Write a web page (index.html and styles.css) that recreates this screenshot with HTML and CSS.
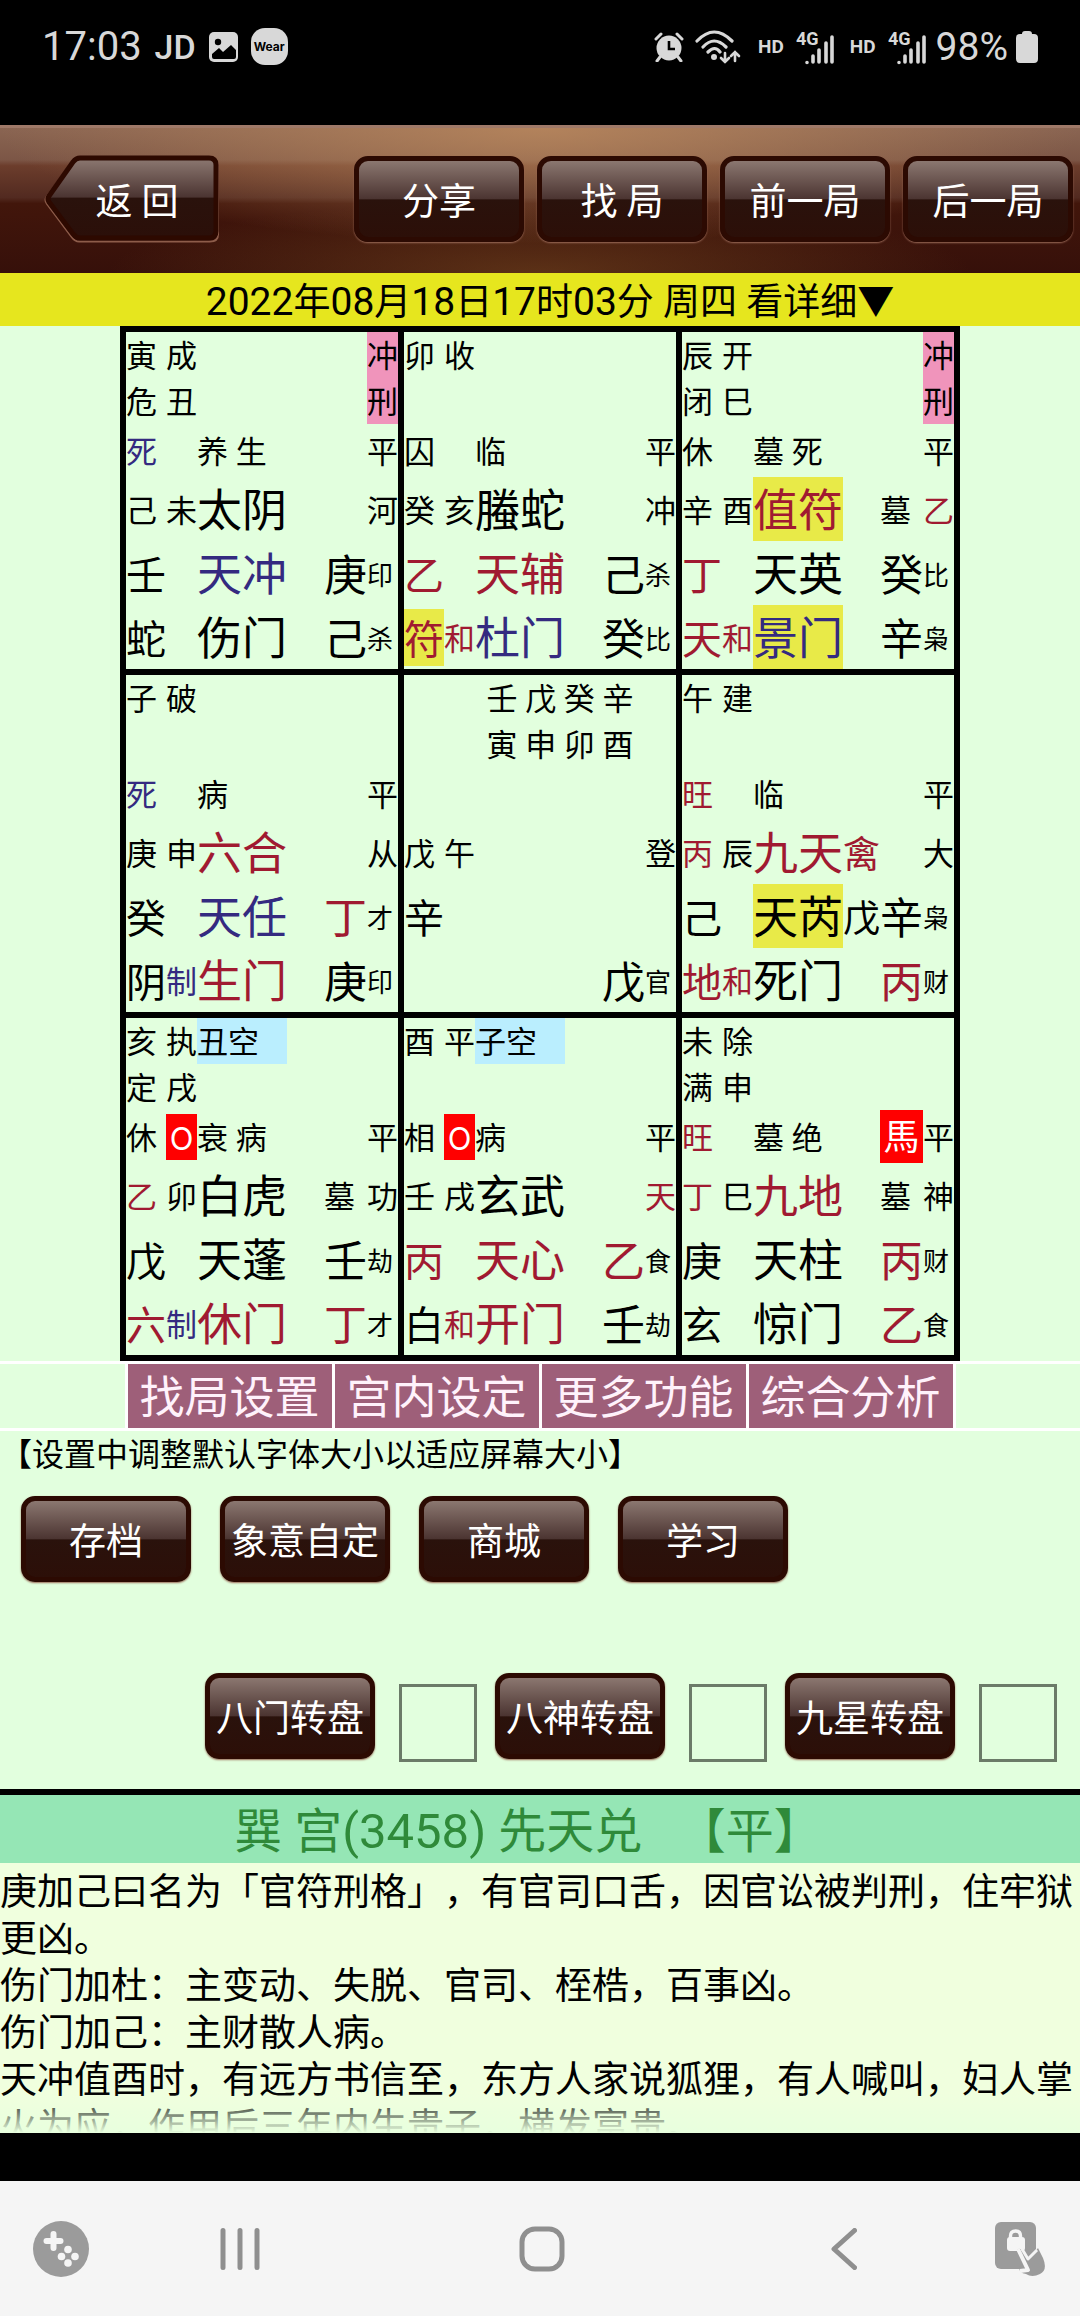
FILE: index.html
```html
<!DOCTYPE html>
<html lang="zh-CN">
<head>
<meta charset="utf-8">
<meta name="viewport" content="width=device-width, initial-scale=1">
<title>奇门排盘</title>
<link rel="stylesheet" href="styles.css">
</head>
<body>
<div class="status">
  <div class="status-left">
    <span class="clock">17:03</span>
    <span class="jd">JD</span>
    <svg class="pic" width="29" height="30" viewBox="0 0 29 30"><rect width="29" height="30" rx="5" fill="#d8d8d8"/><circle cx="9" cy="10" r="3.2" fill="#000"/><path d="M3 22l7-6 4 4 8-7 5 5v7q0 2-2 2H5q-2 0-2-2z" fill="#000"/></svg>
    <span class="wear">Wear</span>
  </div>
  <div class="status-right">
    <svg width="30" height="30" viewBox="0 0 30 30"><circle cx="15" cy="16" r="12.5" fill="#d8d8d8"/><path d="M2 7l5-5M28 7l-5-5M6 25l-3 4M24 25l3 4" stroke="#d8d8d8" stroke-width="3" stroke-linecap="round"/><path d="M15 9v8h6" fill="none" stroke="#000" stroke-width="2.6"/></svg>
    <svg class="wifi" width="46" height="34" viewBox="0 0 46 34" fill="none" stroke="#d8d8d8" stroke-width="3.2" stroke-linecap="round"><path d="M2 11q17-18 35 0M8 17q11-12 23 0M13 22q7-7 12 0"/><path d="M30 23v9m-4-4l4 4 4-4M40 31v-9m-4 4l4-4 4 4" stroke-width="2.6"/><circle cx="19" cy="27" r="1.4"/></svg>
    <span class="hd">HD</span>
    <svg width="40" height="40" viewBox="0 0 40 40"><text x="0" y="18" class="net">4G</text><path d="M11 35.500v0M17 29v6M23 23v12M30 16v19M36 10v25" stroke="#d8d8d8" stroke-width="3.600" stroke-linecap="round"/></svg>
    <span class="hd">HD</span>
    <svg width="40" height="40" viewBox="0 0 40 40"><text x="0" y="18" class="net">4G</text><path d="M11 35.500v0M17 29v6M23 23v12M30 16v19M36 10v25" stroke="#d8d8d8" stroke-width="3.600" stroke-linecap="round"/></svg>
    <span class="pct">98%</span>
    <svg width="22" height="32" viewBox="0 0 22 32"><path d="M6 3q0-3 3-3h4q3 0 3 3h2q4 0 4 4v21q0 4-4 4H4q-4 0-4-4V7q0-4 4-4z" fill="#d8d8d8"/></svg>
  </div>
</div>

<header class="bar">
  <button class="back" type="button">
    <svg viewBox="0 0 178 90" width="178" height="90" aria-hidden="true">
      <defs><linearGradient id="g" x1="0" y1="0" x2="0" y2="1"><stop offset="0" stop-color="#8d7972"/><stop offset=".49" stop-color="#4b3431"/><stop offset=".5" stop-color="#2a120c"/><stop offset="1" stop-color="#2b0f09"/></linearGradient></defs>
      <path d="M35 4.500H166q8 0 8 8v68q0 7-8 7H35q-4 0-7-4L3 50q-3-4 0-8L28 8q3-3.500 7-3.500z" fill="none" stroke="#8d5c4a" stroke-width="2"/>
      <path d="M36 4H165q7 0 7 7v66q0 7-7 7H36q-4 0-7-4L5 48q-2-3 0-6L29 8q3-4 7-4z" fill="url(#g)" stroke="#2d0900" stroke-width="5"/>
    </svg>
    <span>返 回</span>
  </button>
  <nav class="tools">
    <button class="btn" type="button">分享</button>
    <button class="btn" type="button">找 局</button>
    <button class="btn" type="button">前一局</button>
    <button class="btn" type="button">后一局</button>
  </nav>
</header>

<button class="date" type="button"><span class="num">2022</span>年<span class="num">08</span>月<span class="num">18</span>日<span class="num">17</span>时<span class="num">03</span>分 周四 看详细▼</button>

<main class="main">
<section class="board">
  <div class="palace">
    <div class="row s"><span class="c1">寅</span><span class="c2">成</span><span class="c6 pink">冲</span></div>
    <div class="row s"><span class="c1">危</span><span class="c2">丑</span><span class="c6 pink">刑</span></div>
    <div class="row m"><span class="c1 blue">死</span><span class="c3">养 生</span><span class="c6">平</span></div>
    <div class="row l"><span class="c1">己</span><span class="c2">未</span><span class="c3 big">太阴</span><span class="c6">河</span></div>
    <div class="row l"><span class="c1 mid">壬</span><span class="c3 big blue">天冲</span><span class="c5 stem">庚</span><span class="c6 tiny">印</span></div>
    <div class="row l"><span class="c1 mid">蛇</span><span class="c3 big">伤门</span><span class="c5 stem">己</span><span class="c6 tiny">杀</span></div>
  </div>
  <div class="palace">
    <div class="row s"><span class="c1">卯</span><span class="c2">收</span></div>
    <div class="row s"></div>
    <div class="row m"><span class="c1">囚</span><span class="c3">临</span><span class="c6">平</span></div>
    <div class="row l"><span class="c1">癸</span><span class="c2">亥</span><span class="c3 big">螣蛇</span><span class="c6">冲</span></div>
    <div class="row l"><span class="c1 mid red">乙</span><span class="c3 big red">天辅</span><span class="c5 stem">己</span><span class="c6 tiny">杀</span></div>
    <div class="row l"><span class="c1 mid red hl">符</span><span class="c2 red">和</span><span class="c3 big blue">杜门</span><span class="c5 stem">癸</span><span class="c6 tiny">比</span></div>
  </div>
  <div class="palace">
    <div class="row s"><span class="c1">辰</span><span class="c2">开</span><span class="c6 pink">冲</span></div>
    <div class="row s"><span class="c1">闭</span><span class="c2">巳</span><span class="c6 pink">刑</span></div>
    <div class="row m"><span class="c1">休</span><span class="c3">墓 死</span><span class="c6">平</span></div>
    <div class="row l"><span class="c1">辛</span><span class="c2">酉</span><span class="c3 big red hl">值符</span><span class="c5">墓</span><span class="c6 red">乙</span></div>
    <div class="row l"><span class="c1 mid red">丁</span><span class="c3 big">天英</span><span class="c5 stem">癸</span><span class="c6 tiny">比</span></div>
    <div class="row l"><span class="c1 mid red">天</span><span class="c2 red">和</span><span class="c3 big blue hl">景门</span><span class="c5 stem">辛</span><span class="c6 tiny">枭</span></div>
  </div>
  <div class="palace">
    <div class="row s"><span class="c1">子</span><span class="c2">破</span></div>
    <div class="row s"></div>
    <div class="row m"><span class="c1 blue">死</span><span class="c3">病</span><span class="c6">平</span></div>
    <div class="row l"><span class="c1">庚</span><span class="c2">申</span><span class="c3 big red">六合</span><span class="c6">从</span></div>
    <div class="row l"><span class="c1 mid">癸</span><span class="c3 big blue">天任</span><span class="c5 stem red">丁</span><span class="c6 tiny">才</span></div>
    <div class="row l"><span class="c1 mid">阴</span><span class="c2 blue">制</span><span class="c3 big red">生门</span><span class="c5 stem">庚</span><span class="c6 tiny">印</span></div>
  </div>
  <div class="palace">
    <div class="row s"><span class="pillars">壬 戊 癸 辛</span></div>
    <div class="row s"><span class="pillars">寅 申 卯 酉</span></div>
    <div class="row m"></div>
    <div class="row l"><span class="c1">戊</span><span class="c2">午</span><span class="c6">登</span></div>
    <div class="row l"><span class="c1 mid">辛</span></div>
    <div class="row l"><span class="c5 stem">戊</span><span class="c6 tiny">官</span></div>
  </div>
  <div class="palace">
    <div class="row s"><span class="c1">午</span><span class="c2">建</span></div>
    <div class="row s"></div>
    <div class="row m"><span class="c1 red">旺</span><span class="c3">临</span><span class="c6">平</span></div>
    <div class="row l"><span class="c1 red">丙</span><span class="c2">辰</span><span class="c3 big red">九天</span><span class="c4 guest red">禽</span><span class="c6">大</span></div>
    <div class="row l"><span class="c1 mid">己</span><span class="c3 big hl">天芮</span><span class="c4 guest">戊</span><span class="c5 stem">辛</span><span class="c6 tiny">枭</span></div>
    <div class="row l"><span class="c1 mid red">地</span><span class="c2 red">和</span><span class="c3 big">死门</span><span class="c5 stem red">丙</span><span class="c6 tiny">财</span></div>
  </div>
  <div class="palace">
    <div class="row s"><span class="c1">亥</span><span class="c2">执</span><span class="c3 sky">丑空</span></div>
    <div class="row s"><span class="c1">定</span><span class="c2">戌</span></div>
    <div class="row m"><span class="c1">休</span><span class="c2 mark void">O</span><span class="c3">衰 病</span><span class="c6">平</span></div>
    <div class="row l"><span class="c1 red">乙</span><span class="c2">卯</span><span class="c3 big">白虎</span><span class="c5">墓</span><span class="c6">功</span></div>
    <div class="row l"><span class="c1 mid">戊</span><span class="c3 big">天蓬</span><span class="c5 stem">壬</span><span class="c6 tiny">劫</span></div>
    <div class="row l"><span class="c1 mid red">六</span><span class="c2 blue">制</span><span class="c3 big red">休门</span><span class="c5 stem red">丁</span><span class="c6 tiny">才</span></div>
  </div>
  <div class="palace">
    <div class="row s"><span class="c1">酉</span><span class="c2">平</span><span class="c3 sky">子空</span></div>
    <div class="row s"></div>
    <div class="row m"><span class="c1">相</span><span class="c2 mark void">O</span><span class="c3">病</span><span class="c6">平</span></div>
    <div class="row l"><span class="c1">壬</span><span class="c2">戌</span><span class="c3 big">玄武</span><span class="c6 red">天</span></div>
    <div class="row l"><span class="c1 mid red">丙</span><span class="c3 big red">天心</span><span class="c5 stem red">乙</span><span class="c6 tiny">食</span></div>
    <div class="row l"><span class="c1 mid">白</span><span class="c2 red">和</span><span class="c3 big red">开门</span><span class="c5 stem">壬</span><span class="c6 tiny">劫</span></div>
  </div>
  <div class="palace">
    <div class="row s"><span class="c1">未</span><span class="c2">除</span></div>
    <div class="row s"><span class="c1">满</span><span class="c2">申</span></div>
    <div class="row m"><span class="c1 red">旺</span><span class="c3">墓 绝</span><span class="c5 mark horse">馬</span><span class="c6">平</span></div>
    <div class="row l"><span class="c1 red">丁</span><span class="c2">巳</span><span class="c3 big red">九地</span><span class="c5">墓</span><span class="c6">神</span></div>
    <div class="row l"><span class="c1 mid">庚</span><span class="c3 big">天柱</span><span class="c5 stem red">丙</span><span class="c6 tiny">财</span></div>
    <div class="row l"><span class="c1 mid">玄</span><span class="c3 big">惊门</span><span class="c5 stem red">乙</span><span class="c6 tiny">食</span></div>
  </div>
</section>

<nav class="tabs">
  <span class="side"></span>
  <button type="button">找局设置</button>
  <button type="button">宫内设定</button>
  <button type="button">更多功能</button>
  <button type="button">综合分析</button>
  <span class="side"></span>
</nav>

<p class="note">【设置中调整默认字体大小以适应屏幕大小】</p>

<div class="actions">
  <button class="btn" type="button">存档</button>
  <button class="btn" type="button">象意自定</button>
  <button class="btn" type="button">商城</button>
  <button class="btn" type="button">学习</button>
</div>

<div class="turns">
  <div class="turn"><button class="btn" type="button" id="t1">八门转盘</button><input type="checkbox" aria-labelledby="t1"></div>
  <div class="turn"><button class="btn" type="button" id="t2">八神转盘</button><input type="checkbox" aria-labelledby="t2"></div>
  <div class="turn"><button class="btn" type="button" id="t3">九星转盘</button><input type="checkbox" aria-labelledby="t3"></div>
</div>

<h1 class="title">巽 宫<span class="num">(3458)</span> 先天兑&nbsp;&nbsp; 【平】&nbsp;&nbsp;</h1>
<article class="detail">
  <p>庚加己曰名为「官符刑格」，有官司口舌，因官讼被判刑，住牢狱更凶。</p>
  <p>伤门加杜：主变动、失脱、官司、桎梏，百事凶。</p>
  <p>伤门加己：主财散人病。</p>
  <p>天冲值酉时，有远方书信至，东方人家说狐狸，有人喊叫，妇人掌火为应，作用后三年内生贵子，横发富贵。</p>
</article>
</main>

<footer class="sysnav">
  <button class="end" type="button" aria-label="游戏工具"><svg width="56" height="56" viewBox="0 0 56 56"><circle cx="28" cy="28" r="28" fill="#9b9b9b"/><path d="M20.500 13v14M13.500 20h14" stroke="#f5f5f5" stroke-width="6" stroke-linecap="round"/><g fill="#f5f5f5"><circle cx="35" cy="28.500" r="3.800"/><circle cx="28.500" cy="35.500" r="3.800"/><circle cx="42" cy="35.500" r="3.800"/><circle cx="35" cy="42" r="3.800"/></g></svg></button>
  <button type="button" aria-label="最近任务"><svg width="40" height="42" viewBox="0 0 40 42"><path d="M3 2.500v37M20 2.500v37M37 2.500v37" stroke="#8f8f8f" stroke-width="5" stroke-linecap="round"/></svg></button>
  <button type="button" aria-label="主页"><svg width="46" height="46" viewBox="0 0 46 46"><rect x="3" y="3" width="40" height="40" rx="13" fill="none" stroke="#8f8f8f" stroke-width="5"/></svg></button>
  <button type="button" aria-label="返回"><svg width="26" height="42" viewBox="0 0 26 42"><path d="M23.500 2.500L3 21l20.500 18.500" fill="none" stroke="#8f8f8f" stroke-width="5" stroke-linecap="round" stroke-linejoin="round"/></svg></button>
  <button class="start" type="button" aria-label="锁定触摸"><svg width="52" height="54" viewBox="0 0 52 54"><rect width="41" height="47" rx="6" fill="#9b9b9b"/><rect x="12" y="15" width="18" height="14" rx="3" fill="#f5f5f5"/><path d="M15.500 17v-3q0-5 5-5t5 5v3" fill="none" stroke="#f5f5f5" stroke-width="3.400"/><path d="M22 28q3-3 5 1l6 10 2-8q2-4 5-1l3-4 5 10q5 12-3 16-8 4-14 0-7-1-7-7l6-2z" fill="#9b9b9b"/><path d="M23 27l10 21-8 1" fill="none" stroke="#f5f5f5" stroke-width="4" stroke-linejoin="round"/><path d="M27 27l6 10 9-9" fill="none" stroke="#f5f5f5" stroke-width="3" stroke-linejoin="round"/></svg></button>
</footer>
</body>
</html>
```
FILE: styles.css
```css
* { box-sizing: border-box; }

body {
  margin: 0;
  height: 100vh;
  display: flex;
  flex-direction: column;
  background: #000;
  color: #000;
  font-family: Roboto, "Noto Sans CJK SC", sans-serif;
  font-size: 37px;
  text-spacing-trim: space-all;
}

button {
  margin: 0;
  padding: 0;
  border: 0;
  background: none;
  color: inherit;
  font: inherit;
  white-space: nowrap;
}

p, h1 { margin: 0; font-weight: 400; }
svg { display: block; flex: none; }

/* phone status bar */
.status {
  flex: none;
  height: 125px;
  padding: 0 42px 32px;
  display: flex;
  justify-content: space-between;
  align-items: center;
  color: #d8d8d8;
}
.status-left, .status-right { display: flex; align-items: center; }
.status-left { gap: 13px; }
.status-right { gap: 8px; }
.clock { font-size: 40px; line-height: 48px; }
.pct { font-size: 39px; line-height: 48px; }
.jd { font-size: 34px; line-height: 48px; font-weight: 500; }
.wear {
  width: 37px;
  height: 37px;
  border-radius: 14px;
  background: #d8d8d8;
  color: #000;
  font: 700 12px/37px Inter, sans-serif;
  text-align: center;
}
.wifi { margin: 0 3px; }
.hd { padding: 0 4px 0 6px; font-size: 19px; font-weight: 700; }
.net { font: 700 18px Roboto, sans-serif; fill: #d8d8d8; }

/* leather header */
.bar {
  flex: none;
  height: 148px;
  padding: 0 7px 4px 44px;
  display: flex;
  justify-content: space-between;
  align-items: center;
  border-top: 3px solid #9f7968;
  background:
    radial-gradient(ellipse 50% 80% at 50% 0, #bd8a5ecc, #bd8a5e00),
    radial-gradient(ellipse 40% 50% at 50% 100%, #75471f99, #75471f00),
    linear-gradient(#8a6552 0, #7c5646 22%, #6c3d2c 26%, #522a20 48%, #42160b 52%, #36100a 100%);
}
.tools { display: flex; gap: 13px; }
.btn {
  width: 170px;
  height: 86px;
  border: 5px solid #2c0a02;
  border-radius: 14px;
  background: linear-gradient(#8b7770, #4b3431 50%, #2a120c 51%, #2c0f08);
  box-shadow: 0 1px 2px #9a6a58;
  color: #fff;
}
.back {
  position: relative;
  width: 178px;
  height: 90px;
  color: #fff;
}
.back svg { position: absolute; inset: 0; }
.back span { position: relative; padding-left: 8px; }

.date {
  flex: none;
  height: 53px;
  padding: 6px 0 0 20px;
  background: #e6e61e;
  line-height: 47px;
}
.date .num { font-size: 39px; }

.main {
  flex: 1;
  min-height: 0;
  display: flex;
  flex-direction: column;
  background: #e2ffde;
}

/* nine-palace board */
.board {
  flex: none;
  width: 100%;
  max-width: 840px;
  margin: 0 auto;
  display: grid;
  grid-template-columns: repeat(3, minmax(0, 1fr));
  gap: 6px;
  border: 6px solid #000;
  background: #000;
  font-size: 31px;
  line-height: 42px;
  white-space: nowrap;
}
.palace { background: #e2ffde; }
.row {
  display: grid;
  grid-template-columns: minmax(0, 40fr) minmax(0, 31fr) minmax(0, 90fr) minmax(0, 37fr) minmax(0, 43fr) minmax(0, 31fr);
  align-items: center;
}
.s { min-height: 46px; }
.m { min-height: 53px; }
.l { min-height: 64px; }
.row > * { grid-row: 1; padding-top: 4px; }
.l > * { padding-top: 6px; }
.c1 { grid-column: 1; }
.c2 { grid-column: 2; }
.c3 { grid-column: 3; }
.c4 { grid-column: 4; }
.c5 { grid-column: 5; }
.c6 { grid-column: 6; }
.pillars { grid-column: 3 / 6; text-align: center; }
.tiny { font-size: 26px; }
.guest { font-size: 37px; line-height: 51px; }
.mid { font-size: 40px; line-height: 51px; }
.stem { font-size: 43px; line-height: 58px; }
.big { font-size: 45px; line-height: 58px; }
.red { color: #a01a31; }
.blue { color: #342a80; }
.hl { background: #e8ea48; }
.pink { background: #f094bb; }
.sky { background: #baeefe; }
.mark { background: #f00; color: #fff; text-align: center; }
.void { font-family: Inter, sans-serif; }
.horse { font-size: 36px; line-height: 49px; }

.tabs {
  flex: none;
  display: grid;
  grid-template-columns: 1fr repeat(4, 204px) 1fr;
  gap: 3px;
  padding: 3px 0;
  background: #fff;
  font-size: 45px;
  line-height: 58px;
}
.tabs button { padding-top: 6px; background: #9e5f79; color: #fff2fb; }
.side { background: #e2ffde; }

.note { flex: none; font-size: 32px; line-height: 48px; }

.actions {
  flex: none;
  display: flex;
  gap: 29px;
  padding: 17px 21px 0;
}
.turns {
  flex: none;
  display: flex;
  justify-content: flex-end;
  gap: 18px;
  padding: 91px 23px 27px;
}
.turn { display: flex; gap: 24px; }
.turn input {
  appearance: none;
  width: 78px;
  height: 78px;
  margin: 11px 0 0;
  border: 3px solid #6b7b68;
}

.title {
  flex: none;
  padding-top: 6px;
  border-top: 6px solid #000;
  background: #95e6b5;
  color: #2f8a3a;
  font-size: 48px;
  line-height: 62px;
  text-align: center;
}
.title .num { font-size: 49px; }

.detail {
  flex: 1;
  min-height: 0;
  overflow: hidden;
  position: relative;
  padding-top: 6px;
  background: #f0ffde;
  line-height: 47px;
}
.detail::after {
  content: "";
  position: absolute;
  inset: auto 0 0;
  height: 40px;
  background: linear-gradient(#e8ffde00, #e8ffde);
}

/* phone navigation keys */
.sysnav {
  flex: none;
  height: 135px;
  margin-top: 48px;
  display: grid;
  grid-template-columns: 89fr 302fr 302fr 302fr 85fr;
  place-items: center;
  background: #f5f5f5;
}
.end { justify-self: end; }
.start { justify-self: start; }
```
